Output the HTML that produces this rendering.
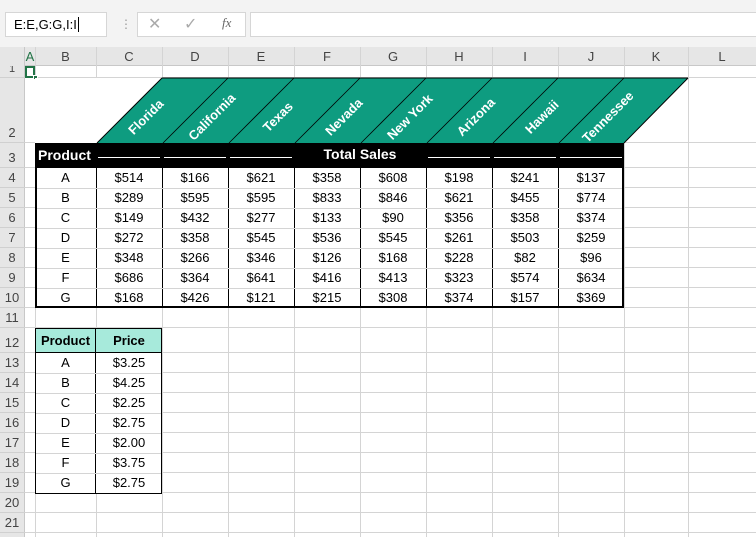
<!DOCTYPE html>
<html><head><meta charset="utf-8"><style>
body{margin:0;width:756px;height:537px;overflow:hidden;background:#fff;font-family:"Liberation Sans",sans-serif;position:relative}
.a{position:absolute;box-sizing:border-box}
.t{position:absolute;font-size:13px;color:#000;text-align:center;line-height:20px}
</style></head><body>
<div class="a" style="left:0;top:0;width:756px;height:47px;background:#f3f3f3"></div>
<div class="a" style="left:5px;top:12px;width:102px;height:25px;background:#fff;border:1px solid #d6d6d6;font-size:13px;line-height:23px;padding-left:8px">E:E,G:G,I:I<span style="border-left:1px solid #000;margin-left:1px"></span></div>
<div class="a" style="left:120px;top:17px;color:#999;font-size:12px">⋮</div>
<div class="a" style="left:137px;top:12px;width:109px;height:25px;background:#fff;border:1px solid #d6d6d6"></div>
<div class="a" style="left:148px;top:14px;color:#aaa;font-size:16px">✕</div>
<div class="a" style="left:184px;top:14px;color:#aaa;font-size:16px">✓</div>
<div class="a" style="left:222px;top:15px;color:#666;font-size:13px;font-style:italic;font-family:'Liberation Serif',serif">fx</div>
<div class="a" style="left:250px;top:12px;width:506px;height:25px;background:#fff;border:1px solid #d6d6d6;border-right:none"></div>
<div id="g"></div>
<svg class="a" style="left:0;top:0" width="756" height="537">
<polygon points="97,143 162,78 688,78 624,143" fill="#0e9c80"/>
<line x1="97" y1="143" x2="162" y2="78" stroke="#000" stroke-width="1"/>
<line x1="162" y1="78" x2="688" y2="78" stroke="#000" stroke-width="1"/>
<line x1="688" y1="78" x2="624" y2="143" stroke="#000" stroke-width="1"/>
<g stroke="#000" stroke-width="0.8" id="dl"></g>
<g id="st" fill="#fff" font-family="Liberation Sans" font-weight="bold" font-size="13"></g>
</svg>
<script>
var g=document.getElementById('g'),h='';
var cx=[0,25,35,96,162,228,294,360,426,492,558,624,688,756],L=['','A','B','C','D','E','F','G','H','I','J','K','L'];
var ry=[47,66,78,143,168,188,208,228,248,268,288,308,328,353,373,393,413,433,453,473,493,513,533,553];
h+='<div class="a" style="left:0;top:47px;width:756px;height:19px;background:#e6e6e6;border-bottom:1px solid #c8c8c8"></div>';
h+='<div class="a" style="left:0;top:47px;width:25px;height:490px;background:#e6e6e6;border-right:1px solid #c8c8c8"></div>';
for(var i=1;i<13;i++){h+='<div class="t" style="left:'+cx[i]+'px;top:47px;width:'+(cx[i+1]-cx[i])+'px;line-height:19px;color:'+(i==1?'#217346':'#444')+'">'+L[i]+'</div>';
h+='<div class="a" style="left:'+cx[i+1]+'px;top:47px;width:1px;height:490px;background:#d4d4d4"></div>';}
for(var r=1;r<22;r++){var tp=ry[r],bt=ry[r+1];
h+='<div class="a" style="left:25px;top:'+(bt-1)+'px;width:731px;height:1px;background:#d4d4d4"></div>';
h+='<div class="a" style="left:0;top:'+(bt-1)+'px;width:25px;height:1px;background:#d0d0d0"></div>';
if(r==1)h+='<div class="t" style="left:0;top:'+tp+'px;width:24px;height:12px;line-height:6px;color:#444;font-size:11px;overflow:hidden">1</div>';
else h+='<div class="t" style="left:0;top:'+(bt-20)+'px;width:24px;height:20px;color:#444;font-size:13px">'+r+'</div>';}
h+='<div class="a" style="left:25px;top:66px;width:10px;height:12px;border:2px solid #217346"></div><div class="a" style="left:33px;top:75px;width:5px;height:5px;background:#217346;border:1px solid #fff"></div>';
h+='<div class="a" style="left:35px;top:78px;width:589px;height:65px;background:#fff"></div>';
h+='<div class="a" style="left:35px;top:143px;width:589px;height:25px;background:#000"></div>';
h+='<div class="a" style="left:38px;top:143px;color:#fff;font-weight:bold;font-size:14px;line-height:25px">Product</div>';
h+='<div class="a" style="left:294px;top:143px;width:132px;text-align:center;color:#fff;font-weight:bold;font-size:14px;line-height:23px">Total Sales</div>';
[98,164,230,428,494,560].forEach(function(x){h+='<div class="a" style="left:'+x+'px;top:157px;width:62px;height:1px;background:#fff"></div>'});
h+='<div class="a" style="left:35px;top:168px;width:589px;height:140px;background:#fff;border:2px solid #000;border-top:none"></div>';
var d=[['A',514,166,621,358,608,198,241,137],['B',289,595,595,833,846,621,455,774],['C',149,432,277,133,90,356,358,374],['D',272,358,545,536,545,261,503,259],['E',348,266,346,126,168,228,82,96],['F',686,364,641,416,413,323,574,634],['G',168,426,121,215,308,374,157,369]];
for(var c=3;c<11;c++)h+='<div class="a" style="left:'+cx[c]+'px;top:168px;width:1px;height:139px;background:#000"></div>';
for(var r=0;r<7;r++){if(r>0)h+='<div class="a" style="left:37px;top:'+(168+r*20)+'px;width:585px;height:1px;background:#d4d4d4"></div>';
for(var c=0;c<9;c++)h+='<div class="t" style="left:'+cx[c+2]+'px;top:'+(168+r*20)+'px;width:'+(cx[c+3]-cx[c+2])+'px">'+(c?'$'+d[r][c]:d[r][c])+'</div>';}
h+='<div class="a" style="left:35px;top:328px;width:127px;height:166px;background:#fff;border:1px solid #000"></div>';
h+='<div class="a" style="left:36px;top:329px;width:125px;height:24px;background:#a7eadb;border-bottom:1px solid #000"></div>';
h+='<div class="a" style="left:95px;top:328px;width:1px;height:166px;background:#000"></div>';
h+='<div class="t" style="left:35px;top:329px;width:61px;line-height:24px;font-weight:bold">Product</div><div class="t" style="left:96px;top:329px;width:66px;line-height:24px;font-weight:bold">Price</div>';
var p=['3.25','4.25','2.25','2.75','2.00','3.75','2.75'];
for(var r=0;r<7;r++){if(r>0)h+='<div class="a" style="left:36px;top:'+(353+r*20)+'px;width:125px;height:1px;background:#d4d4d4"></div>';
h+='<div class="t" style="left:35px;top:'+(353+r*20)+'px;width:61px">'+'ABCDEFG'[r]+'</div><div class="t" style="left:96px;top:'+(353+r*20)+'px;width:66px">$'+p[r]+'</div>';}
g.innerHTML=h;
var dl='',st='',s=['Florida','California','Texas','Nevada','New York','Arizona','Hawaii','Tennessee'];
for(var k=1;k<8;k++){var x=97+66*k;dl+='<line x1="'+x+'" y1="143" x2="'+(x+65)+'" y2="78"/>';}
for(var k=0;k<8;k++){var x=97+66*k+52,y=120;st+='<text x="'+x+'" y="'+y+'" text-anchor="middle" transform="rotate(-45 '+x+' '+y+')">'+s[k]+'</text>';}
document.getElementById('dl').innerHTML=dl;document.getElementById('st').innerHTML=st;
</script>
</body></html>
